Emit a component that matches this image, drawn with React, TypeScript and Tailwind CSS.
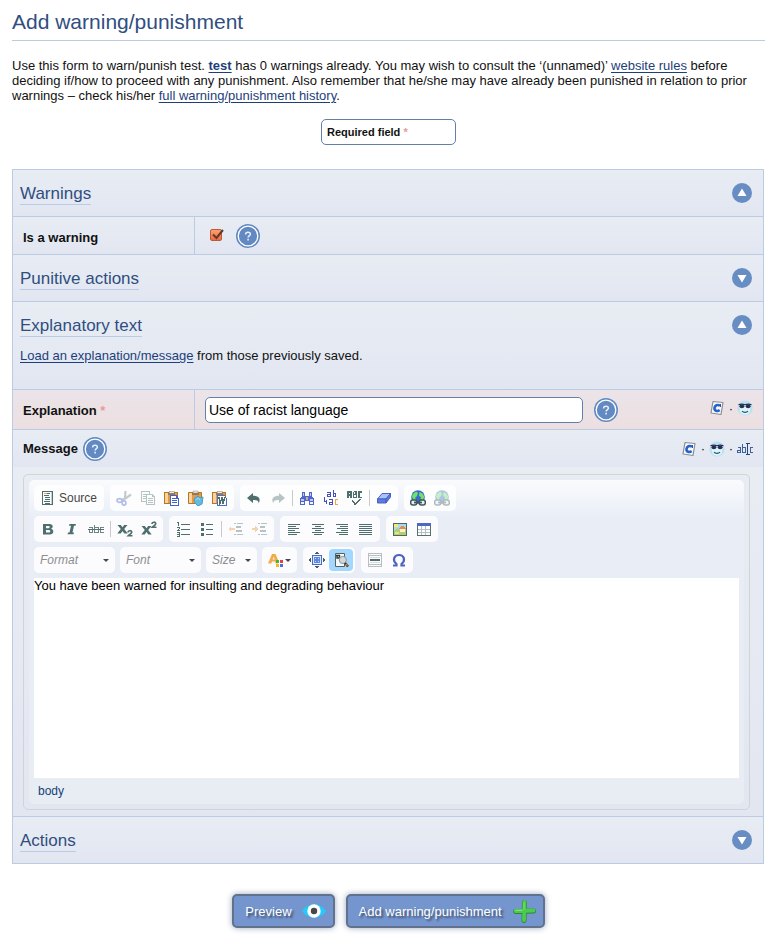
import type { ReactNode } from 'react'
import { clsx } from 'clsx'

interface IconProps {
  children: ReactNode
  crisp?: boolean
}

function Icon({ children, crisp = false }: IconProps) {
  return (
    <svg
      viewBox="0 0 16 16"
      className="size-4 shrink-0"
      fill="none"
      shapeRendering={crisp ? 'crispEdges' : 'auto'}
      aria-hidden="true"
    >
      {children}
    </svg>
  )
}

const ink = '#4f6e6e'

/* Toolbar icons */

const SourceIcon = () => (
  <Icon crisp>
    <path d="M2.500 1.500h10v13h-10z" fill="#fbfdfd" stroke={ink} />
    <path d="M4 3h3v1H4z" fill="#f5a94a" />
    <path d="M4 5h5v1H4zM5 7h5v1H5zM5 9h5v1H5zM4 11h6v1H4zM7 3h3v1H7zM5 13h5v1H5z" fill={ink} />
    <path d="M11 2h1v12h-1z" fill="#c5d2d2" />
  </Icon>
)

const CutIcon = () => (
  <Icon>
    <path d="M9.500 1 9 8l-2 2M15 4.500 9.500 8.500 5 10" stroke="#6d8189" strokeWidth="2.200" />
    <ellipse cx="3.500" cy="10.500" rx="2.500" ry="1.800" stroke="#4963cf" strokeWidth="1.800" />
    <ellipse cx="8" cy="13" rx="1.900" ry="2.200" stroke="#4963cf" strokeWidth="1.800" />
  </Icon>
)

const CopyIcon = () => (
  <Icon crisp>
    <path d="M1.500 1.500h8v10h-8z" fill="#fff" stroke={ink} />
    <path d="M3 4h4M3 6h3M3 8h3" stroke={ink} />
    <path d="M6.500 4.500h6l2 2v8h-8z" fill="#fff" stroke={ink} />
    <path d="M8 8.500h5M8 10.500h5M8 12.500h5M12.500 4.500v2h2" stroke={ink} />
  </Icon>
)

const ClipBoard = () => (
  <>
    <path d="M.500 2.500h13v11H.500z" fill="#e09a48" stroke="#b97424" />
    <path d="M1 3h3v10H1z" fill="#f8d39d" />
    <path d="M4 2h7v3H4z" fill="#8f7a5c" />
    <path d="M5 1h5v2H5z" fill="#ececec" stroke="#a3845b" strokeWidth=".5" />
  </>
)

const PasteIcon = () => (
  <Icon crisp>
    <ClipBoard />
    <path d="M6.500 5.500h6l2 3v7h-8z" fill="#fff" stroke="#4360cc" />
    <path d="M8 8.500h4M8 10.500h5M8 12.500h5" stroke="#4360cc" />
    <path d="M12.500 6v2.500H14" stroke="#4360cc" />
  </Icon>
)

const PasteTextIcon = () => (
  <Icon>
    <ClipBoard />
    <path d="m6 9 4-3 2 2 3-1-1 7-4 2-3-3z" fill="#62bbe0" stroke="#4a9dc6" />
    <path d="m7.500 10 3-2 1.500 2" stroke="#a5dcf2" />
  </Icon>
)

const PasteWordIcon = () => (
  <Icon crisp>
    <ClipBoard />
    <path d="M5.500 5.500h7l2 3v7h-9z" fill="#fff" stroke="#4b70d4" />
    <path d="m7 7 1 6 2-5 1 5 2-6" stroke={ink} strokeWidth="1.500" />
  </Icon>
)

const UndoIcon = () => (
  <Icon>
    <path d="M1 8 7 3v2.800c6 0 8 3 5.700 7.700.2-2.600-1.700-3.700-5.700-3.500v3z" fill={ink} />
  </Icon>
)

const RedoIcon = () => (
  <Icon>
    <path d="M15 8 9 3v2.800c-6 0-8 3-5.700 7.700-.2-2.600 1.700-3.700 5.700-3.500v3z" fill={ink} />
  </Icon>
)

const FindIcon = () => (
  <Icon crisp>
    <path d="M3 2h3v4h4V2h3v4l2 3v6h-5v-4H6v4H1V9l2-3z" fill="#5265ce" />
    <path d="M4 3h1v3H4zM11 3h1v3h-1zM2 9h3v2H2zM11 9h3v2h-3z" fill="#b9c9f6" />
    <path d="M2 12h3v2H2zM11 12h3v2h-3z" fill="#f0f4ff" />
    <path d="M7 7h2v3H7z" fill="#c3b28c" />
  </Icon>
)

const ReplaceIcon = () => (
  <Icon crisp>
    <path d="M4 2h3M7.500 2v5M7 6.500H4.500v-2H7" stroke="#4550ba" />
    <path d="M10.500 0v7M10 3.500h2.500v3H10" stroke="#4550ba" />
    <path d="M6 9.500h3M9.500 9v6M9 14.500H6.500v-2H9" stroke="#4550ba" />
    <path d="M15 9.500h-2.500v5H15" stroke="#f3a43c" />
    <path d="M1.500 7v4.500H4M3.500 9.500v4" stroke="#4550ba" />
  </Icon>
)

const SpellIcon = () => (
  <Icon crisp>
    <path d="M1 8V2h3v6M1 5h3M6.500 1.500v6h3v-3h-3M6.500 1.500h2.500v3M15 2h-3v5.500h3" stroke={ink} strokeWidth="1.500" />
    <path d="m5 10.500 3 3.500 5.500-5" stroke={ink} strokeWidth="1.500" />
  </Icon>
)

const EraserIcon = () => (
  <Icon>
    <path d="M6 3.500h8.500L10 9H1.500z" fill="#a9c2f7" stroke="#4b61c6" />
    <path d="M1.500 9H10v4H1.500zM10 9l4.500-5.500V7L10 13z" fill="#5c7ce0" stroke="#4b61c6" />
  </Icon>
)

const LinkIcon = () => (
  <Icon>
    <circle cx="8" cy="7" r="6.800" fill="#3e68cf" />
    <path d="M2.500 4.500 6 1.500l2 1.500-1 3-2 2 1 2-2 0-2-3zM9.500 2l3 1.500 1.700 3-1.200 4-2.500-1.500.5-2-2-1z" fill="#6be563" />
    <rect x=".700" y="10" width="6" height="5" rx="2" fill="#e6efee" stroke="#3c5857" strokeWidth="1.500" />
    <rect x="9.300" y="10" width="6" height="5" rx="2" fill="#e6efee" stroke="#3c5857" strokeWidth="1.500" />
    <path d="M4 12.500h8" stroke="#3c5857" strokeWidth="1.800" />
  </Icon>
)

const BoldIcon = () => (
  <Icon>
    <path
      d="M3 3h6.500c4 0 4 4 1.500 4.700 3.500.8 3 5.800-1.200 5.800H3zM6 5v2.200h2.500c1.700 0 1.700-2.200 0-2.200zm0 4v2.500h2.800c2 0 2-2.500 0-2.500z"
      fill={ink}
      fillRule="evenodd"
    />
  </Icon>
)

const ItalicIcon = () => (
  <Icon>
    <path d="M5.500 3H12l-.5 1.800H10L8.500 11.500H10L9.500 13.300H3.500L4 11.500h1.500L7 4.800H5z" fill={ink} />
  </Icon>
)

const StrikeIcon = () => (
  <Icon crisp>
    <path d="M1 6.500h3.500v5H1v-3M6.500 4v7.500H10v-5H6.500M15.500 6.500h-3v5h3" stroke="#6c8484" />
    <path d="M0 8.500h16" stroke={ink} />
  </Icon>
)

const ScriptIcon = ({ sup = false }: { sup?: boolean }) => (
  <Icon>
    <path
      d={sup ? 'M.500 5h3.300L5.500 7.300 7.200 5h3.300L7.200 9l3.500 4.500H7.300L5.500 11l-1.800 2.500H.300L3.800 9z' : 'M.500 4h3.300L5.500 6.300 7.200 4h3.300L7.200 8l3.500 4.500H7.300L5.500 10l-1.800 2.500H.300L3.800 8z'}
      fill={ink}
    />
    <path
      d={sup ? 'M11 3c0-2.400 4-2.400 3.700-.2-.2 1.200-2 2-3.500 3.500H15.500' : 'M11 11.500c0-2.400 4-2.400 3.700-.2-.2 1.200-2 2-3.500 3.500H15.500'}
      stroke={ink}
      strokeWidth="1.600"
    />
  </Icon>
)

const NumberedIcon = () => (
  <Icon crisp>
    <path d="M6 3h9v1H6zM6 8h9v1H6zM6 13h9v1H6z" fill={ink} />
    <path d="M2 1h2v4H3V2H2zM2 6h3v2H4v1h1v1H2V9h1V8h1V7H2zM2 11h3v5H2v-1h2v-1H2v-1h2v-1H2z" fill={ink} />
  </Icon>
)

const BulletedIcon = () => (
  <Icon crisp>
    <path d="M2 2h3v3H2zM2 7h3v3H2zM2 12h3v3H2zM7 3h7v1H7zM7 8h7v1H7zM7 13h7v1H7z" fill={ink} />
  </Icon>
)

const IndentIcon = ({ more = false }: { more?: boolean }) => (
  <Icon crisp>
    <path d="M6 2h2v1H6zM9 2h6v1H9zM8 5h5v2H8zM8 9h6v2H8zM6 13h2v1H6zM9 13h6v1H9z" fill={ink} />
    <path d={more ? 'M0 7h3V5l3 3-3 3V9H0z' : 'M7 7H3V5L0 8l3 3V9h4z'} fill="#ee9b31" />
  </Icon>
)

const alignments = {
  left: 'M2 3h12v1H2zM2 5h8v1H2zM2 7h11v1H2zM2 9h7v1H2zM2 11h12v1H2zM2 13h9v1H2z',
  center: 'M2 3h12v1H2zM5 5h6v1H5zM2 7h12v1H2zM5 9h6v1H5zM2 11h12v1H2zM4 13h8v1H4z',
  right: 'M2 3h12v1H2zM6 5h8v1H6zM3 7h11v1H3zM7 9h7v1H7zM2 11h12v1H2zM5 13h9v1H5z',
  justify: 'M1 3h13v1H1zM1 5h13v1H1zM1 7h13v1H1zM1 9h13v1H1zM1 11h13v1H1zM1 13h13v1H1z',
}

const AlignIcon = ({ align }: { align: keyof typeof alignments }) => (
  <Icon crisp>
    <path d={alignments[align]} fill={ink} />
  </Icon>
)

const ImageIcon = () => (
  <Icon crisp>
    <path d="M1.500 2.500h13v12h-13z" fill="#a9dbee" stroke="#4f6863" />
    <path d="M2 3h4v3H2z" fill="#fbe871" />
    <path d="M2 10l3-3 3 3 6-1v5H2z" fill="#b3cd6c" />
    <path d="M9 5h3l2 3H7z" fill="#e58a55" />
    <path d="M8 8h5v3H8z" fill="#fff0cf" />
    <path d="M3 11h4v2H3z" fill="#e8e38e" />
  </Icon>
)

const TableIcon = () => (
  <Icon crisp>
    <path d="M1.500 2.500h13v12h-13z" fill="#fff" stroke="#56706f" />
    <path d="M1 2h14v3H1z" fill="#4a68c4" />
    <path d="M2 8.500h12M2 11.500h12M5.500 5v9M9.500 5v9" stroke="#b5bfc4" />
  </Icon>
)

const ColorIcon = () => (
  <Icon>
    <path d="M0 11.500 4 2h3.500L10 8v3.500H7.800L7 9.500H4l-.7 2zm4.700-4h2L5.800 4.500z" fill="#f3aa4a" fillRule="evenodd" />
    <path d="M8 8h3v3H8z" fill="#45b63c" />
    <path d="M12 8h3v3h-3z" fill="#e8403a" />
    <path d="M8 12h3v3H8z" fill="#f5b62c" />
    <path d="M12 12h3v3h-3z" fill="#3f75e0" />
  </Icon>
)

const MaximizeIcon = () => (
  <Icon crisp>
    <path d="M3.500 3.500h9v9h-9z" fill="#dfe9ff" stroke="#476bcb" />
    <path d="M5 5h6v6H5z" fill="#5f86e3" />
    <path d="M6 6h1v1H6zM9 6h1v1H9zM6 9h1v1H6zM9 9h1v1H9z" fill="#c9dafc" />
    <path d="m8 0 3 2H5zM8 16l3-2H5zM0 8l2-3v6zM16 8l-2-3v6z" fill="#47615f" />
  </Icon>
)

const BlocksIcon = () => (
  <Icon>
    <path d="M2.500 1.500h9v13h-9z" fill="#f5f8fa" stroke="#536362" />
    <path d="M3 3.500h4M6.500 3v3.500M4 3v3h2" stroke="#293c3c" strokeWidth="1.400" />
    <circle cx="9.800" cy="8" r="3.600" fill="#d1d6d7" stroke="#8a999b" />
    <path d="m12 11 3 3.500" stroke="#423224" strokeWidth="2.400" />
    <path d="m12.800 12 1.700 1.500" stroke="#f28d24" strokeWidth="1.500" />
  </Icon>
)

const RuleIcon = () => (
  <Icon crisp>
    <path d="M1 1h14v1H1zM1 3h14v1H1zM1 12h14v1H1zM1 14h14v1H1zM1 1h1v14H1zM14 1h1v14h-1z" fill="#b9bfbf" />
    <path d="M3 5h10v1H3zM3 10h10v1H3z" fill="#d8dddd" />
    <path d="M3 7h10v2H3z" fill={ink} />
  </Icon>
)

const OmegaIcon = () => (
  <Icon>
    <path d="M2 13.500h3.500v-1.500C1 8.500 3 3 8 3s7 5.500 2.500 9v1.500H14" stroke="#4c63c5" strokeWidth="2.200" />
  </Icon>
)

/* Field icons */

const ComcodeIcon = () => (
  <Icon>
    <path d="M4 1.500 14 2.500 12 14.500 2 13z" fill="#f9fafc" stroke="#8b8e94" strokeWidth="1.200" strokeLinejoin="round" />
    <path d="M11 5.800C8.500 4 5.800 5.300 5.500 8c-.2 2.800 2.700 3.700 5.200 2.200" stroke="#2763c9" strokeWidth="2.600" />
    <path d="M11.400 4v3" stroke="#183f91" />
  </Icon>
)

const SmileyIcon = () => (
  <Icon>
    <circle cx="8" cy="8" r="7.600" fill="#b9e0ef" />
    <circle cx="8" cy="9.500" r="5.300" fill="#dcf5fc" />
    <path d="M1.500 4.800c2-.8 4.500-.8 6.500 0 2-.8 4.500-.8 6.500 0" stroke="#2b2c50" strokeWidth="1.200" />
    <ellipse cx="4.900" cy="6.300" rx="2.400" ry="1.900" fill="#2b2c50" />
    <ellipse cx="11.100" cy="6.300" rx="2.400" ry="1.900" fill="#2b2c50" />
    <path d="M5 11c1.300 1.900 4.700 1.900 6 0" stroke="#2d4d6d" strokeWidth="1.200" />
  </Icon>
)

const TextCursorIcon = () => (
  <Icon crisp>
    <path d="M1 6.500h2.500v5H.500v-2.500h3M5.500 3v8.500h3v-5h-3M15.500 6.500h-2.500v5h2.500" stroke="#3a62a5" />
    <path d="M8.500 2.500h4M8.500 13.500h4M10.500 2.500v11" stroke="#2b4377" />
  </Icon>
)

function HelpButton() {
  return (
    <button type="button" aria-label="Help" className="size-6 shrink-0">
      <svg viewBox="0 0 24 24" className="size-6" aria-hidden="true">
        <circle cx="12" cy="12" r="12" fill="#6289c1" />
        <circle cx="12" cy="12" r="9.800" fill="none" stroke="#fff" strokeWidth="1.300" />
        <path d="M9.600 10.400c0-2.900 4.800-2.800 4.800-.2 0 1.400-2.300 1.500-2.300 3.300" fill="none" stroke="#e9f0f8" strokeWidth="1.500" />
        <path d="M11.300 14.800h1.600v1.600h-1.600z" fill="#e9f0f8" />
      </svg>
    </button>
  )
}

interface SectionTitleProps {
  title: string
  open?: boolean
}

function SectionTitle({ title, open = false }: SectionTitleProps) {
  return (
    <div className="flex items-start justify-between pt-3 pr-[11px] pl-[7px]">
      <h2 className="border-b border-[#bccae3] pt-0.5 text-[17px] leading-5 text-[#304e80]">{title}</h2>
      <button type="button" aria-label={`${open ? 'Contract' : 'Expand'} ${title}`} className="size-5 pt-px">
        <svg viewBox="0 0 20 20" className="size-5" aria-hidden="true">
          <circle cx="10" cy="10" r="10" fill="#688dc3" />
          <path d={open ? 'M10 5.500 14.500 13h-9z' : 'M5.500 7h9L10 14.500z'} fill="#fff" />
        </svg>
      </button>
    </div>
  )
}

interface ToolProps {
  label: string
  icon: ReactNode
  disabled?: boolean
  active?: boolean
}

function Tool({ label, icon, disabled, active }: ToolProps) {
  return (
    <button
      type="button"
      aria-label={label}
      disabled={disabled}
      className={clsx('flex h-[22px] w-6 items-center justify-center rounded-sm', disabled && 'opacity-40', active && 'bg-[#a3d7ff]')}
    >
      {icon}
    </button>
  )
}

function ToolGroup({ children }: { children: ReactNode }) {
  return <div className="mr-1.5 flex h-[26px] items-center rounded-[5px] bg-white/85 px-0.5">{children}</div>
}

function Separator() {
  return <span className="mx-0.5 h-4 w-px bg-[#c9c9c9]" />
}

function Arrow() {
  return <span className="size-0 border-x-[3px] border-t-[3px] border-x-transparent border-t-[#474747]" />
}

function Combo({ label, width }: { label: string; width: string }) {
  return (
    <div className={clsx('mr-[5px] flex h-[26px] items-center rounded-[5px] bg-white/85 pr-1.5', width)}>
      <select aria-label={label} className="min-w-0 flex-1 appearance-none bg-transparent pl-1.5 text-xs text-[#8d8d8d] italic">
        <option>{label}</option>
      </select>
      <Arrow />
    </div>
  )
}

function Editor() {
  return (
    <div className="mr-[13px] ml-2.5 rounded-[5px] border border-[#d3d3d3] p-[5px]">
      <div className="rounded-[5px] bg-[#e8edf4] bg-[linear-gradient(#fafbfd,#e8edf6_40px,#e8edf4)] px-[5px] pt-[5px] pb-1">
        <div className="space-y-[5px] pb-[5px]">
          <div className="flex flex-wrap">
            <ToolGroup>
              <button type="button" className="flex w-[66px] items-center gap-[3px] pl-1 text-xs text-[#474747]">
                <SourceIcon />
                Source
              </button>
            </ToolGroup>
            <ToolGroup>
              <Tool label="Cut" icon={<CutIcon />} disabled />
              <Tool label="Copy" icon={<CopyIcon />} disabled />
              <Tool label="Paste" icon={<PasteIcon />} />
              <Tool label="Paste as plain text" icon={<PasteTextIcon />} />
              <Tool label="Paste from Word" icon={<PasteWordIcon />} />
            </ToolGroup>
            <ToolGroup>
              <Tool label="Undo" icon={<UndoIcon />} />
              <Tool label="Redo" icon={<RedoIcon />} disabled />
              <Separator />
              <Tool label="Find" icon={<FindIcon />} />
              <Tool label="Replace" icon={<ReplaceIcon />} />
              <Tool label="Check spelling" icon={<SpellIcon />} />
              <Separator />
              <Tool label="Remove format" icon={<EraserIcon />} />
            </ToolGroup>
            <ToolGroup>
              <Tool label="Link" icon={<LinkIcon />} />
              <Tool label="Unlink" icon={<LinkIcon />} disabled />
            </ToolGroup>
          </div>
          <div className="flex flex-wrap">
            <ToolGroup>
              <Tool label="Bold" icon={<BoldIcon />} />
              <Tool label="Italic" icon={<ItalicIcon />} />
              <Tool label="Strikethrough" icon={<StrikeIcon />} />
              <Separator />
              <Tool label="Subscript" icon={<ScriptIcon />} />
              <Tool label="Superscript" icon={<ScriptIcon sup />} />
            </ToolGroup>
            <ToolGroup>
              <Tool label="Numbered list" icon={<NumberedIcon />} />
              <Tool label="Bulleted list" icon={<BulletedIcon />} />
              <Separator />
              <Tool label="Decrease indent" icon={<IndentIcon />} disabled />
              <Tool label="Increase indent" icon={<IndentIcon more />} disabled />
            </ToolGroup>
            <ToolGroup>
              <Tool label="Align left" icon={<AlignIcon align="left" />} />
              <Tool label="Center" icon={<AlignIcon align="center" />} />
              <Tool label="Align right" icon={<AlignIcon align="right" />} />
              <Tool label="Justify" icon={<AlignIcon align="justify" />} />
            </ToolGroup>
            <ToolGroup>
              <Tool label="Image" icon={<ImageIcon />} />
              <Tool label="Table" icon={<TableIcon />} />
            </ToolGroup>
          </div>
          <div className="flex flex-wrap">
            <Combo label="Format" width="w-[81px]" />
            <Combo label="Font" width="w-[81px]" />
            <Combo label="Size" width="w-[51px]" />
            <ToolGroup>
              <button type="button" aria-label="Text color" className="flex items-center gap-px px-1">
                <ColorIcon />
                <Arrow />
              </button>
            </ToolGroup>
            <ToolGroup>
              <Tool label="Maximize" icon={<MaximizeIcon />} />
              <Tool label="Show blocks" icon={<BlocksIcon />} active />
            </ToolGroup>
            <ToolGroup>
              <Tool label="Horizontal line" icon={<RuleIcon />} />
              <Tool label="Special character" icon={<OmegaIcon />} />
            </ToolGroup>
          </div>
        </div>
        <textarea
          id="message"
          className="block h-[200px] w-full resize-none bg-white text-[13px] leading-4 text-black outline-none"
          defaultValue="You have been warned for insulting and degrading behaviour"
        />
        <div className="px-1 pt-1">
          <button type="button" className="block text-xs leading-[18px] text-[#133f75]">body</button>
        </div>
      </div>
    </div>
  )
}

const link = 'text-[#1d3f79] underline underline-offset-2'
const row = 'border-b border-[#bccae3] bg-linear-to-b from-[#e8edf4] to-[#e1e6f1]'
const requiredRow = 'border-b border-[#bccae3] bg-linear-to-b from-[#ebe4e9] to-[#ecdfe1]'
const button =
  'flex h-[34px] items-center gap-2.5 rounded-[5px] border-2 border-[#62718c] bg-[#7495cd] pr-[7px] pl-[11px] text-[13px] text-white shadow-[0_0_6px_#9aa9bd] text-shadow-[2px_2px_2px_#3d4c66]'

function Dot() {
  return <span className="w-3 text-center text-[13px]">·</span>
}

export default function App() {
  return (
    <main className="bg-white pt-[9px] pr-[9px] pb-[18px] pl-3 font-['Liberation_Sans',Arial,sans-serif] text-[13px] leading-[15px] text-[#111]">
      <h1 className="border-b border-[#bccae3] pb-[5px] text-[21px] leading-[26px] text-[#304e80]">
        Add warning/punishment
      </h1>
      <p className="mt-[17px]">
        Use this form to warn/punish test. <a href="#" className={clsx(link, 'font-bold')}>test</a> has 0 warnings
        already. You may wish to consult the ‘(unnamed)’ <a href="#" className={link}>website rules</a> before deciding
        if/how to proceed with any punishment. Also remember that he/she may have already been punished in relation to
        prior warnings – check his/her <a href="#" className={link}>full warning/punishment history</a>.
      </p>
      <p className="mx-auto mt-4 h-[26px] w-[135px] rounded-[5px] border border-[#6480a8] px-[5px] text-[11px] leading-6 font-bold">
        Required field <span className="text-[#ea9999]">*</span>
      </p>

      <form>
        <div className="mt-6 mr-px border border-b-0 border-[#bccae3]">
          <div className={clsx(row, 'h-[47px]')}>
            <SectionTitle title="Warnings" open />
          </div>
          <div className={clsx(row, 'flex h-[38px]')}>
            <label htmlFor="is-warning" className="w-[182px] border-r border-[#bccae3] pt-[13px] pl-2.5 font-bold">
              Is a warning
            </label>
            <div className="flex items-center gap-3 pl-[15px]">
              <span className="relative flex size-[14px]">
                <input
                  id="is-warning"
                  type="checkbox"
                  defaultChecked
                  className="size-3 appearance-none rounded-xs border border-[#b65c37] bg-linear-to-b from-[#ff9d70] to-[#ef6a3c]"
                />
                <svg viewBox="0 0 14 14" className="pointer-events-none absolute inset-0" fill="none" aria-hidden="true">
                  <path d="m3 5.500 3.500 3.500L13 1" stroke="#63392c" strokeWidth="2" />
                </svg>
              </span>
              <HelpButton />
            </div>
          </div>
          <div className={clsx(row, 'h-[47px]')}>
            <SectionTitle title="Punitive actions" />
          </div>
          <div className={clsx(row, 'h-[88px]')}>
            <SectionTitle title="Explanatory text" open />
            <p className="mt-[11px] px-[7px]">
              <a href="#" className={link}>Load an explanation/message</a> from those previously saved.
            </p>
          </div>
          <div className={clsx(requiredRow, 'flex h-10')}>
            <label htmlFor="explanation" className="w-[182px] shrink-0 border-r border-[#bccae3] pt-[13px] pl-2.5 font-bold">
              Explanation <span className="text-[#ea9999]">*</span>
            </label>
            <div className="flex flex-1 items-center pl-2.5">
              <input
                id="explanation"
                type="text"
                defaultValue="Use of racist language"
                className="h-[26px] w-[378px] min-w-0 rounded-[5px] border border-[#6480a8] bg-white px-[3px] text-[14px] text-black"
              />
              <div className="ml-[11px] flex">
                <HelpButton />
              </div>
              <div className="mr-2.5 mb-[3px] ml-auto flex items-center">
                <button type="button" aria-label="Comcode"><ComcodeIcon /></button>
                <Dot />
                <button type="button" aria-label="Emoticons"><SmileyIcon /></button>
              </div>
            </div>
          </div>
          <div className="flex h-[37px] items-center bg-linear-to-b from-[#e8edf4] to-[#e1e6f1] px-2.5">
            <label htmlFor="message" className="mr-[5px] font-bold">Message</label>
            <HelpButton />
            <div className="ml-auto flex items-center">
              <button type="button" aria-label="Comcode"><ComcodeIcon /></button>
              <Dot />
              <button type="button" aria-label="Emoticons"><SmileyIcon /></button>
              <Dot />
              <button type="button" aria-label="Plain text"><TextCursorIcon /></button>
            </div>
          </div>
          <div className={clsx(row, 'pt-[7px] pb-1.5')}>
            <Editor />
          </div>
          <div className={clsx(row, 'h-[47px]')}>
            <SectionTitle title="Actions" />
          </div>
        </div>

        <div className="mt-[30px] flex justify-center gap-[11px]">
          <button type="button" className={button}>
            Preview
            <svg viewBox="0 0 24 24" className="size-6" aria-hidden="true">
              <path d="M0 12C6 3 18 3 24 12 18 21 6 21 0 12z" fill="#26c9fb" />
              <circle cx="12" cy="12" r="6.700" fill="#fff" />
              <circle cx="12" cy="12" r="3.200" fill="#474747" />
            </svg>
          </button>
          <button type="submit" className={button}>
            Add warning/punishment
            <svg viewBox="0 0 24 24" className="size-6" fill="none" strokeLinecap="round" aria-hidden="true">
              <path d="m12.500 3.500-.5 18M3.500 12.500l18-.5" stroke="#2a8a32" strokeWidth="5" />
              <path d="m12.500 3-.5 18M3.500 12l18-.5" stroke="#4bcb4e" strokeWidth="3.800" />
              <path d="M12 3.500v7M4 11.500h6" stroke="#83df78" />
            </svg>
          </button>
        </div>
      </form>
    </main>
  )
}
